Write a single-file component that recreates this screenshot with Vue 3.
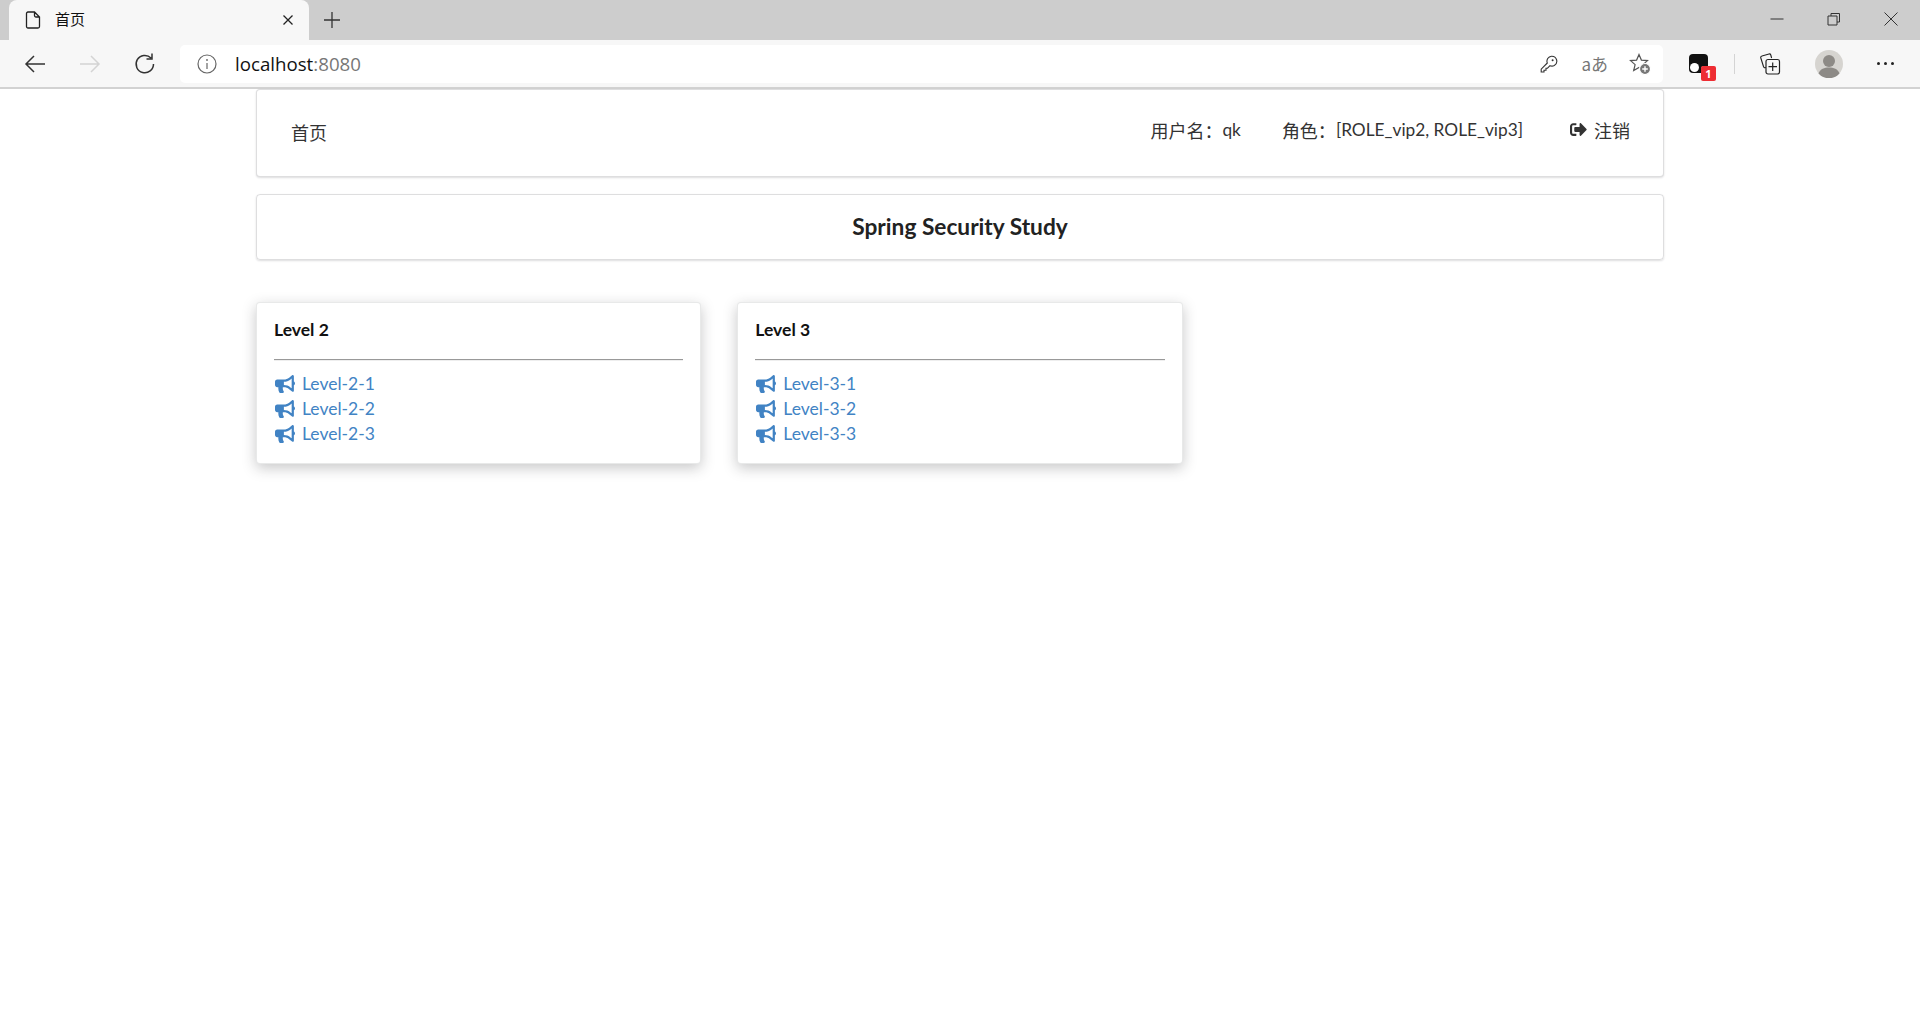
<script setup>
const cards = [
  { title: 'Level 2', links: ['Level-2-1', 'Level-2-2', 'Level-2-3'] },
  { title: 'Level 3', links: ['Level-3-1', 'Level-3-2', 'Level-3-3'] },
]
</script>

<template>
  <div class="browser">
    <div class="tabstrip">
      <div class="tab">
        <svg class="tab-doc" viewBox="0 0 16 18" width="16" height="18"><path d="M2.500 1h7L14.500 6v9.500a1.500 1.500 0 0 1-1.500 1.500H3a1.500 1.500 0 0 1-1.500-1.500V2.500A1.500 1.500 0 0 1 3 1zM9.500 1v3.500a1.500 1.500 0 0 0 1.500 1.500h3.500" fill="none" stroke="#222" stroke-width="1.300"/></svg>
        <span class="tab-title">首页</span>
        <svg class="tab-close" viewBox="0 0 12 12" width="12" height="12"><path d="M1.500 1.500l9 9M10.500 1.500l-9 9" stroke="#222" stroke-width="1.300"/></svg>
      </div>
      <svg class="tab-new" viewBox="0 0 18 18" width="18" height="18"><path d="M9 1v16M1 9h16" stroke="#333" stroke-width="1.300"/></svg>
      <div class="win-btns">
        <svg viewBox="0 0 14 14" width="14" height="14"><path d="M0.500 7h13" stroke="#333" stroke-width="1"/></svg>
        <svg viewBox="0 0 14 14" width="14" height="14"><path d="M1 4h9v9H1zM4 4V1.500h8.500V10H10" fill="none" stroke="#333" stroke-width="1"/></svg>
        <svg viewBox="0 0 14 14" width="14" height="14"><path d="M0.500 0.500l13 13M13.500 0.500l-13 13" stroke="#333" stroke-width="1"/></svg>
      </div>
    </div>
    <div class="toolbar">
      <svg class="nav back" viewBox="0 0 22 20" width="22" height="20"><path d="M21 10H2M10 2l-8 8 8 8" fill="none" stroke="#333" stroke-width="1.500"/></svg>
      <svg class="nav fwd" viewBox="0 0 22 20" width="22" height="20"><path d="M1 10h19M12 2l8 8-8 8" fill="none" stroke="#d4d4d4" stroke-width="1.500"/></svg>
      <svg class="nav reload" viewBox="0 0 22 22" width="22" height="22"><path d="M19.500 11A8.700 8.700 0 1 1 17 5M18 0.500V6h-5.500" fill="none" stroke="#333" stroke-width="1.500"/></svg>
      <div class="address">
        <svg viewBox="0 0 20 20" width="20" height="20"><circle cx="10" cy="10" r="9" fill="none" stroke="#666" stroke-width="1.200"/><path d="M10 9v6" stroke="#666" stroke-width="1.200"/><circle cx="10" cy="6" r="0.900" fill="#666"/></svg>
        <span class="url">localhost<span class="port">:8080</span></span>
        <span class="addr-spacer"></span>
        <svg class="addr-ic" viewBox="0 0 18 18" width="18" height="18"><path d="M11.500 1.200a5 5 0 0 1 2.800 9.300 5 5 0 0 1-4.300.2L7.500 13.200H6v2H4v1.800H1.200v-2.800L7.300 8a5 5 0 0 1 4.200-6.800z" fill="none" stroke="#333" stroke-width="1.100"/><circle cx="12.600" cy="5.300" r="1" fill="#333"/></svg>
        <span class="translate">aあ</span>
        <svg class="addr-ic star" viewBox="0 0 22 22" width="22" height="22"><path d="M10 1.500l2.400 5.600 6.100.5-4.600 4 1.400 6-5.300-3.200-5.300 3.200 1.400-6-4.600-4 6.100-.5z" fill="none" stroke="#555" stroke-width="1.200"/><circle cx="16" cy="16" r="5.500" fill="#777" stroke="#fff" stroke-width="1.200"/><path d="M16 13.200v5.600M13.200 16h5.600" stroke="#fff" stroke-width="1.400"/></svg>
      </div>
      <div class="tools">
        <span class="ext">
          <span class="ext-box"><i class="ext-dot a"></i><i class="ext-dot b"></i></span>
          <span class="ext-badge">1</span>
        </span>
        <span class="tool-sep"></span>
        <svg class="coll" viewBox="0 0 22 22" width="22" height="22"><path d="M7 14.500l-.7.200A1.500 1.500 0 0 1 4.500 13.500L1.800 5A1.500 1.500 0 0 1 3 3l7-2a1.500 1.500 0 0 1 1.800 1l.8 3" fill="none" stroke="#222" stroke-width="1.100"/><rect x="7" y="6.500" width="13.500" height="14.500" rx="2" fill="#f7f7f7" stroke="#222" stroke-width="1.200"/><path d="M13.700 9.500v8.500M9.500 13.700h8.500" stroke="#222" stroke-width="1.200"/></svg>
        <svg class="avatar" viewBox="0 0 28 28" width="28" height="28"><circle cx="14" cy="14" r="14" fill="#d6d4d0"/><circle cx="14" cy="11" r="6" fill="#8d8a86"/><path d="M3.500 23.500c1.500-4.500 6-6 10.500-6s9 1.500 10.500 6a14 14 0 0 1-21 0z" fill="#8d8a86"/></svg>
        <span class="dots"><i></i><i></i><i></i></span>
      </div>
    </div>
  </div>

  <main class="page">
    <nav class="menu">
      <span class="menu-home">首页</span>
      <span class="menu-spacer"></span>
      <span class="menu-item">用户名：<span class="latin">qk</span></span>
      <span class="menu-item role">角色：<span class="latin">[ROLE_vip2, ROLE_vip3]</span></span>
      <span class="menu-item logout">
        <svg viewBox="0 0 512 512" width="17" height="17"><path fill="#333" d="M497 273L329 441c-15 15-41 4.500-41-17v-96H152c-13.300 0-24-10.700-24-24v-96c0-13.300 10.700-24 24-24h136V88c0-21.400 25.900-32 41-17l168 168c9.300 9.400 9.300 24.600 0 34zM192 436v-40c0-6.600-5.400-12-12-12H96c-17.700 0-32-14.300-32-32V160c0-17.700 14.300-32 32-32h84c6.600 0 12-5.400 12-12V76c0-6.600-5.400-12-12-12H96c-53 0-96 43-96 96v192c0 53 43 96 96 96h84c6.600 0 12-5.400 12-12z"/></svg>
        <span>注销</span>
      </span>
    </nav>

    <section class="banner"><h3>Spring Security Study</h3></section>

    <div class="grid">
      <article v-for="c in cards" :key="c.title" class="card">
        <h5>{{ c.title }}</h5>
        <hr />
        <a v-for="l in c.links" :key="l" class="link">
          <svg viewBox="0 0 576 512" width="20" height="18"><path fill="#4183c4" d="M576 240c0-23.630-12.950-44.040-32-55.120V32.010C544 23.260 537.020 0 512 0c-7.120 0-14.190 2.380-19.980 7.020l-85.030 68.030C364.280 109.190 310.660 128 256 128H64c-35.350 0-64 28.650-64 64v96c0 35.350 28.650 64 64 64h33.700c-1.390 10.480-2.180 21.140-2.180 32 0 39.770 9.260 77.350 25.560 110.940 5.190 10.690 16.520 17.060 28.400 17.060h74.280c26.050 0 41.690-29.840 25.900-50.560-16.400-21.520-26.150-48.360-26.150-77.440 0-11.110 1.620-21.790 4.410-32H256c54.660 0 108.280 18.810 150.980 52.950l85.030 68.030a32.023 32.023 0 0 0 19.980 7.020c24.920 0 32-22.780 32-32V295.130C563.050 284.040 576 263.630 576 240zm-96 141.420l-33.050-26.440C392.950 311.780 325.120 288 256 288v-96c69.120 0 136.950-23.780 190.950-66.980L480 98.580v282.840z"/></svg>
          <span>{{ l }}</span>
        </a>
      </article>
    </div>
  </main>
</template>

<style>
html, body { margin: 0; background: #fff; }
</style>

<style scoped>
.browser {
  height: 89px;
  box-sizing: border-box;
  font-family: "Open Sans", "Noto Sans CJK SC", sans-serif;
}
.tabstrip {
  height: 40px;
  background: #cdcdcd;
  display: flex;
  align-items: center;
  padding-left: 9px;
}
.tab {
  width: 300px;
  height: 40px;
  box-sizing: border-box;
  background: #f7f7f7;
  border-radius: 8px 8px 0 0;
  display: flex;
  align-items: center;
  padding: 0 15px 0 16px;
}
.tab-title {
  margin-left: 14px;
  margin-top: -3px;
  font-size: 15px;
  color: #111;
  flex: 1;
  font-family: "Noto Sans CJK SC", sans-serif;
}
.tab-new { margin-left: 14px; }
.win-btns {
  margin-left: auto;
  display: flex;
  align-items: center;
  gap: 43px;
  padding: 0 22px 2px 0;
}
.toolbar {
  height: 49px;
  box-sizing: border-box;
  background: #f7f7f7;
  border-bottom: 2px solid #d2d2d2;
  display: flex;
  align-items: center;
}
.nav { flex: none; }
.back { margin-left: 24px; }
.fwd { margin-left: 33px; }
.reload { margin-left: 33px; }
.address {
  margin-left: 24px;
  width: 1483px;
  height: 38px;
  background: #fff;
  border-radius: 5px;
  display: flex;
  align-items: center;
  box-sizing: border-box;
  padding: 0 12px 0 17px;
}
.url {
  margin-left: 18px;
  font-size: 18.700px;
  color: #111;
  font-family: "Open Sans", sans-serif;
}
.port { color: #777; }
.addr-spacer { flex: 1; }
.translate {
  margin: 0 21px 0 23px;
  font-size: 17px;
  color: #777;
  font-family: "Noto Sans CJK JP", sans-serif;
}
.tools {
  display: flex;
  align-items: center;
  flex: 1;
  padding-left: 26px;
}
.ext { position: relative; width: 20px; height: 20px; }
.ext-box {
  display: block;
  width: 19px;
  height: 19px;
  background: #111;
  border-radius: 4px;
  position: relative;
}
.ext-dot {
  position: absolute;
  bottom: 1px;
  width: 9px;
  height: 9px;
  border-radius: 50%;
  background: #fff;
}
.ext-dot.a { left: 1px; }
.ext-dot.b { left: 12px; width: 6px; height: 6px; background: #ccc; }
.ext-badge {
  position: absolute;
  left: 12px;
  top: 12px;
  width: 15px;
  height: 15px;
  background: #ee2d33;
  color: #fff;
  border-radius: 2px;
  font-size: 11px;
  font-weight: 700;
  line-height: 15px;
  text-align: center;
}
.tool-sep {
  width: 1px;
  height: 20px;
  background: #d4d4d4;
  margin: 0 24px 0 25px;
}
.avatar { margin-left: 34px; }
.dots {
  margin-left: 34px;
  display: flex;
  gap: 4px;
}
.dots i {
  width: 3px;
  height: 3px;
  border-radius: 50%;
  background: #222;
}

.page {
  width: 1408px;
  min-height: 941px;
  margin: 0 auto;
  box-sizing: border-box;
  font-family: Lato, "Noto Sans CJK SC", sans-serif;
  font-size: 18px;
  color: #333;
}
.menu {
  height: 88px;
  box-sizing: border-box;
  background: #fff;
  border: 1px solid rgba(34, 36, 38, 0.15);
  border-radius: 4px;
  box-shadow: 0 1px 2px 0 rgba(34, 36, 38, 0.15);
  display: flex;
  align-items: center;
  padding: 0 33px 0 33px;
}
.menu-home { margin-top: -2px; margin-left: 1px; }
.menu-spacer { flex: 1; }
.menu-item {
  margin-top: -7px;
  margin-left: 44px;
  display: flex;
  align-items: center;
}
.latin { font-size: 17.300px; }
.role { margin-left: 41px; }
.logout { gap: 7px; margin-left: 47px; }
.banner {
  margin-top: 17px;
  height: 66px;
  box-sizing: border-box;
  border: 1px solid rgba(34, 36, 38, 0.15);
  border-radius: 4px;
  box-shadow: 0 1px 2px 0 rgba(34, 36, 38, 0.15);
  display: flex;
  align-items: center;
  justify-content: center;
  padding-bottom: 2px;
}
.banner h3 {
  margin: 0;
  font-size: 22.700px;
  font-weight: 700;
  color: #222;
}
.grid {
  margin-top: 42px;
  display: grid;
  grid-template-columns: repeat(3, 1fr);
  gap: 36px;
}
.card {
  height: 162px;
  box-sizing: border-box;
  background: #fff;
  border: 1px solid rgba(34, 36, 38, 0.1);
  border-radius: 4px;
  box-shadow: 0 4px 14px rgba(34, 36, 38, 0.25);
  padding: 17px 17px 0;
  display: flex;
  flex-direction: column;
}
.card h5 {
  margin: 0;
  font-size: 17.500px;
  line-height: 20px;
  font-weight: 700;
  color: #111;
}
.card hr {
  margin: 19px 0 10px;
  height: 0;
  border: 0;
  border-top: 1px solid #999;
  border-bottom: 1px solid #eee;
}
.link {
  display: flex;
  align-items: center;
  height: 25px;
  color: #4183c4;
  font-size: 17.500px;
  cursor: pointer;
}
.link svg { margin: 0 7px 0 1px; flex: none; }
</style>
